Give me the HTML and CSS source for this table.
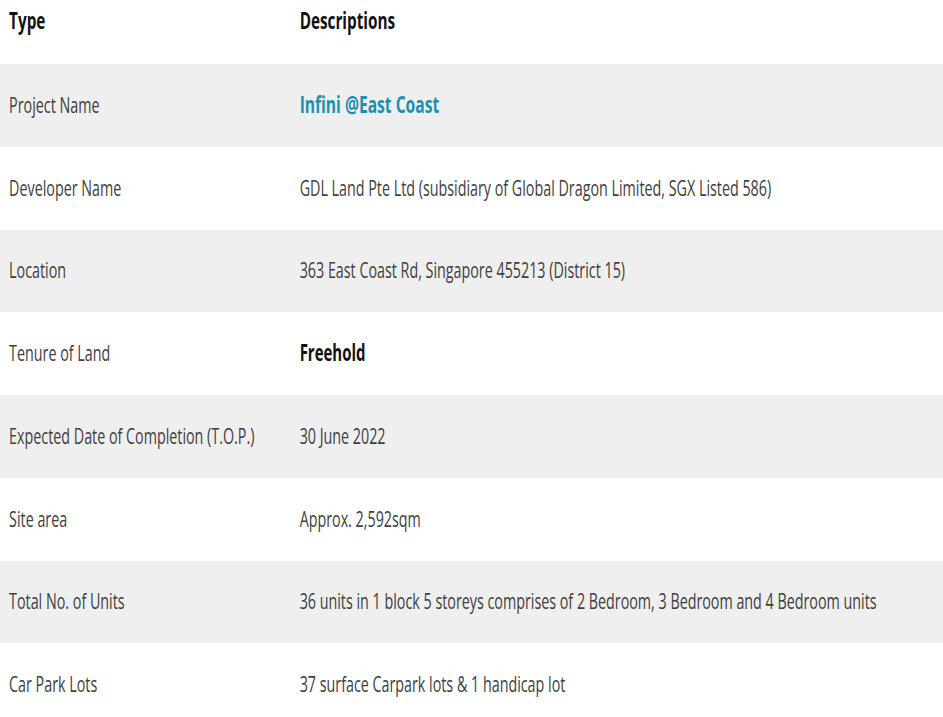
FILE: index.html
```html
<!DOCTYPE html>
<html lang="en">
<head>
<meta charset="utf-8">
<title>Infini @East Coast</title>
<link rel="stylesheet" href="styles.css">
</head>
<body>
<div class="viewport">
  <div class="table">
    <div class="row head">
      <div class="c1">Type</div>
      <div class="c2">Descriptions</div>
    </div>
    <div class="row alt">
      <div class="c1">Project Name</div>
      <div class="c2"><a class="link" href="#">Infini @East Coast</a></div>
    </div>
    <div class="row">
      <div class="c1">Developer Name</div>
      <div class="c2">GDL Land Pte Ltd (subsidiary of Global Dragon Limited, SGX Listed 586)</div>
    </div>
    <div class="row alt">
      <div class="c1">Location</div>
      <div class="c2">363 East Coast Rd, Singapore 455213 (District 15)</div>
    </div>
    <div class="row">
      <div class="c1">Tenure of Land</div>
      <div class="c2"><strong class="strong">Freehold</strong></div>
    </div>
    <div class="row alt">
      <div class="c1">Expected Date of Completion (T.O.P.)</div>
      <div class="c2">30 June 2022</div>
    </div>
    <div class="row">
      <div class="c1">Site area</div>
      <div class="c2">Approx. 2,592sqm</div>
    </div>
    <div class="row alt">
      <div class="c1">Total No. of Units</div>
      <div class="c2">36 units in 1 block 5 storeys comprises of 2 Bedroom, 3 Bedroom and 4 Bedroom units</div>
    </div>
    <div class="row">
      <div class="c1">Car Park Lots</div>
      <div class="c2">37 surface Carpark lots &amp; 1 handicap lot</div>
    </div>
  </div>
</div>
</body>
</html>
```

FILE: styles.css
```css
html, body {
  margin: 0;
  padding: 0;
  background: #ffffff;
}

.viewport {
  width: 943px;
  height: 717px;
  overflow: hidden;
}

.table {
  width: 1451px;
  transform: scaleX(0.65);
  transform-origin: 0 0;
  font-family: "Open Sans", "Liberation Sans", sans-serif;
  font-size: 22px;
  color: #404040;
}

.row {
  display: flex;
  align-items: center;
  height: 82.75px;
  padding-bottom: 3px;
  box-sizing: border-box;
}

.row.alt {
  background: #efefef;
}

.row.head {
  height: 64px;
  align-items: flex-start;
  padding-top: 4px;
  padding-bottom: 0;
  font-size: 23.5px;
  font-weight: 700;
  color: #111111;
}

.c1 {
  width: 461px;
  padding-left: 14px;
  box-sizing: border-box;
  flex: none;
}

.c2 {
  flex: 1;
}

.link {
  color: #1f8fb0;
  font-size: 24px;
  font-weight: 700;
  text-decoration: none;
}

.strong {
  color: #111111;
  font-size: 23px;
  font-weight: 700;
}
```
